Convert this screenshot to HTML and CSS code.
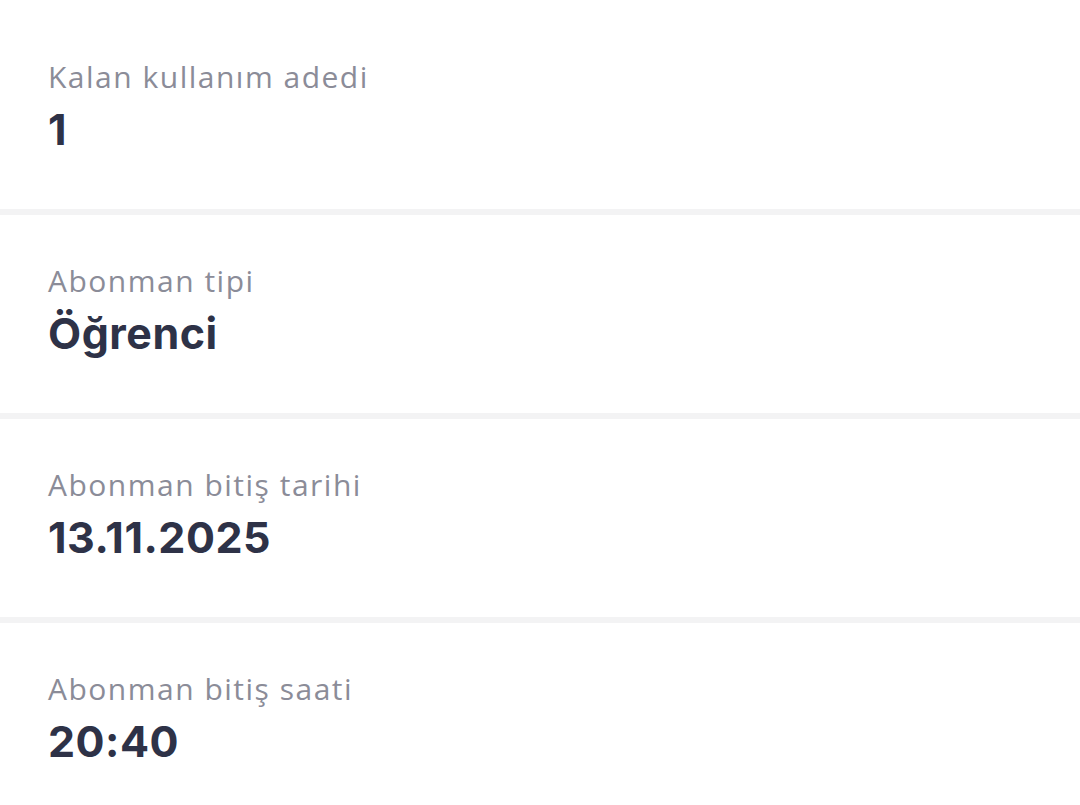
FILE: index.html
```html
<!DOCTYPE html>
<html lang="tr">
<head>
<meta charset="utf-8">
<title>Abonman</title>
<link rel="stylesheet" href="styles.css">
</head>
<body>
<main class="list">
  <section class="row">
    <div class="label">Kalan kullanım adedi</div>
    <div class="value">1</div>
  </section>
  <section class="row">
    <div class="label">Abonman tipi</div>
    <div class="value">Öğrenci</div>
  </section>
  <section class="row">
    <div class="label">Abonman bitiş tarihi</div>
    <div class="value">13.11.2025</div>
  </section>
  <section class="row">
    <div class="label">Abonman bitiş saati</div>
    <div class="value">20:40</div>
  </section>
</main>
</body>
</html>
```

FILE: styles.css
```css
html, body {
  margin: 0;
  padding: 0;
  background: #ffffff;
}
body {
  font-family: "Open Sans", "Noto Sans", sans-serif;
  width: 1080px;
  height: 805px;
  overflow: hidden;
}
.list {
  display: flex;
  flex-direction: column;
  padding-top: 11px;
}
.row {
  box-sizing: border-box;
  height: 204px;
  padding: 0 48px;
  border-bottom: 6px solid #f3f3f4;
  background: #ffffff;
  display: flex;
  flex-direction: column;
}
.label {
  margin-top: 46px;
  font-size: 30px;
  line-height: 40px;
  font-weight: 500;
  letter-spacing: 1.5px;
  color: #8b8c98;
}
.value {
  margin-top: 4px;
  font-family: "Inter", "Open Sans", sans-serif;
  font-size: 43px;
  line-height: 56px;
  font-weight: 700;
  letter-spacing: 0.5px;
  font-variant-numeric: proportional-nums;
  color: #2e3247;
}
```
